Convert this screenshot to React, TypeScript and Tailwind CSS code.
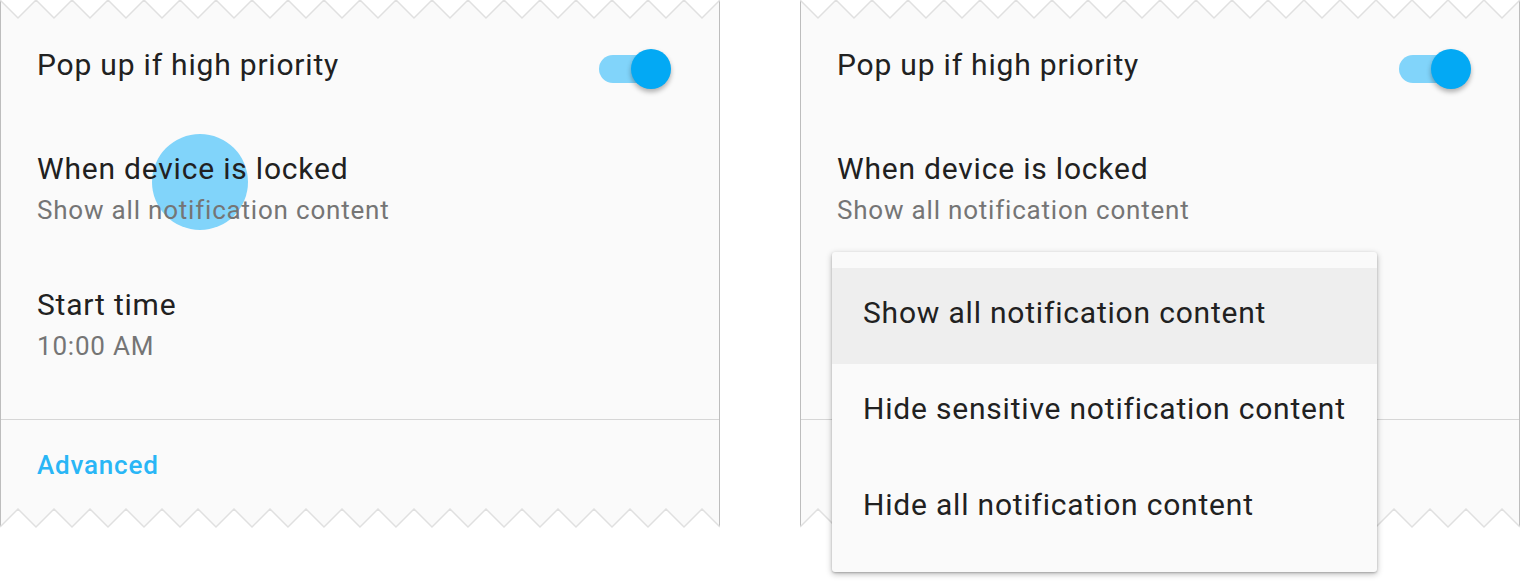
import React from 'react';

const zigTop = (() => {
  const pts: string[] = [];
  for (let k = 0; k <= 20; k++) {
    pts.push(`${k * 36},1`);
    if (k < 20) pts.push(`${k * 36 + 18},19`);
  }
  return pts.join(' ');
})();

const zigBottom = (() => {
  const pts: string[] = [];
  for (let k = 0; k <= 20; k++) {
    pts.push(`${k * 36},19`);
    if (k < 20) pts.push(`${k * 36 + 18},1`);
  }
  return pts.join(' ');
})();

function TornEdges() {
  return (
    <>
      <svg className="absolute left-[-1px] top-[-1px]" width="720" height="21" viewBox="0 0 720 21">
        <polygon points={`0,0 ${zigTop} 720,0`} fill="#ffffff" />
        <polyline points={zigTop} fill="none" stroke="#e0e0e0" strokeWidth="1.5" />
      </svg>
      <svg className="absolute left-[-1px] top-[508px]" width="720" height="21" viewBox="0 0 720 21">
        <polygon points={`0,21 ${zigBottom} 720,21`} fill="#ffffff" />
        <polyline points={zigBottom} fill="none" stroke="#e0e0e0" strokeWidth="1.5" />
      </svg>
    </>
  );
}

function Toggle() {
  return (
    <div className="relative mt-[4px] w-[72px] h-[40px] mr-[48px]">
      <div className="absolute left-0 top-[6px] w-[68px] h-[28px] rounded-full bg-[#81d4fa]" />
      <div className="absolute left-[32px] top-0 w-[40px] h-[40px] rounded-full bg-[#03a9f4] shadow-[0_3px_5px_rgba(0,0,0,0.3)]" />
    </div>
  );
}

function Panel({ ripple, menu }: { ripple?: boolean; menu?: boolean }) {
  return (
    <div className="relative w-[720px] h-[528px] shrink-0 bg-[#fafafa] border-x border-[#bdbdbd]">
      <TornEdges />
      {ripple && (
        <div className="absolute left-[151px] top-[134px] w-[96px] h-[96px] rounded-full bg-[#81d4fa]" />
      )}

      <div className="relative flex flex-col pt-[45px] tracking-[0.8px]">
        <div className="flex items-start justify-between pl-[36px]">
          <span className="text-[30px] leading-[40px] text-[#212121]">Pop up if high priority</span>
          <Toggle />
        </div>

        <div className="mt-[60px] pl-[36px]">
          <div className="text-[30px] leading-[40px] text-[#212121]">When device is locked</div>
          <div className="mt-[1px] text-[26px] leading-[40px] text-[#757575]">Show all notification content</div>
        </div>

        <div className="mt-[55px] pl-[36px]">
          <div className="text-[30px] leading-[40px] text-[#212121]">Start time</div>
          <div className="mt-[1px] text-[26px] leading-[40px] text-[#757575]">10:00 AM</div>
        </div>

        <div className="mt-[53px] h-px bg-[#d6d6d6]" />

        <div className="mt-[25px] pl-[36px] text-[26px] leading-[40px] font-medium text-[#29b6f6]">Advanced</div>
      </div>

      {menu && (
        <div className="absolute left-[31px] top-[252px] w-[545px] py-[16px] rounded-[3px] bg-[#fafafa] shadow-[0_2px_6px_rgba(0,0,0,0.28),0_1px_2px_rgba(0,0,0,0.2)]">
          {['Show all notification content', 'Hide sensitive notification content', 'Hide all notification content'].map(
            (item, i) => (
              <div
                key={item}
                className={`h-[96px] flex items-center pl-[31px] pb-[8px] text-[30px] tracking-[0.8px] text-[#212121] ${i === 0 ? 'bg-[#eeeeee]' : ''}`}
              >
                {item}
              </div>
            )
          )}
        </div>
      )}
    </div>
  );
}

export default function App() {
  return (
    <div className="w-[1520px] h-[588px] bg-white flex gap-[80px] font-['Roboto',sans-serif]">
      <Panel ripple />
      <Panel menu />
    </div>
  );
}
